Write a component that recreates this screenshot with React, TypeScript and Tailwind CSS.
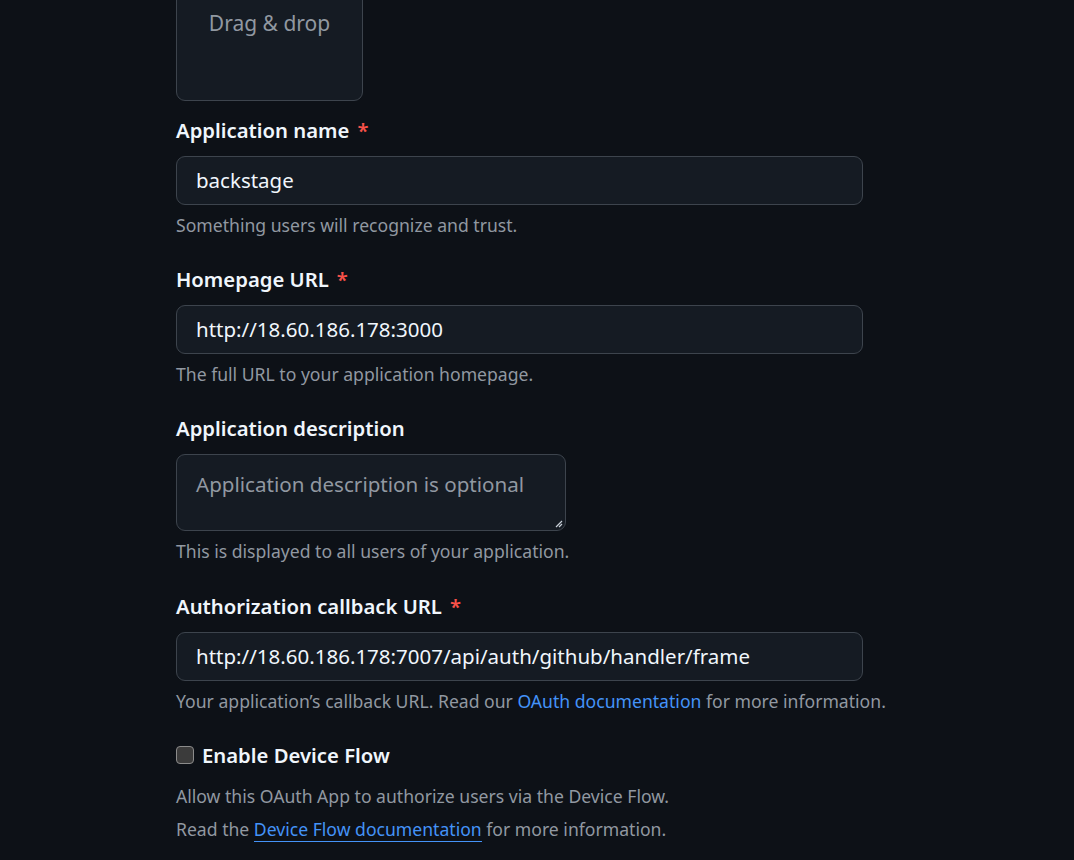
const font = { fontFamily: '"Noto Sans", "Open Sans", Arial, sans-serif' }

const Label = ({ children, required }: { children: string; required?: boolean }) => (
  <div className="flex h-[26px] items-center text-[20.3px] font-semibold leading-[26px] text-[#f0f6fc]">
    {children}
    {required ? <span className="ml-2 text-[#f85149]">*</span> : null}
  </div>
)

const Input = ({ value }: { value: string }) => (
  <div className="mt-[13px] flex h-[49px] w-[687px] items-center rounded-[9px] border border-[#3d444d] bg-[#151b23] px-[19px] text-[20.5px] text-[#f0f6fc]">
    {value}
  </div>
)

const Hint = ({ children }: { children: React.ReactNode }) => (
  <div className="mt-[8px] h-[24px] whitespace-nowrap text-[17.6px] leading-[24px] text-[#9198a1]">{children}</div>
)

export default function App() {
  return (
    <div style={font} className="min-h-[860px] w-full overflow-hidden bg-[#0d1117]">
      <div className="ml-[176px] flex flex-col">
        <div className="-mt-[90px] flex h-[191px] w-[187px] justify-center rounded-[9px] border border-[#3d444d] bg-[#151b23] pt-[97px] text-[21px] text-[#9198a1]">
          Drag &amp; drop
        </div>

        <div className="mt-[16px]">
          <Label required>Application name</Label>
          <Input value="backstage" />
          <Hint>Something users will recognize and trust.</Hint>
        </div>

        <div className="mt-[29px]">
          <Label required>Homepage URL</Label>
          <Input value="http://18.60.186.178:3000" />
          <Hint>The full URL to your application homepage.</Hint>
        </div>

        <div className="mt-[29px]">
          <Label>Application description</Label>
          <div className="relative mt-[13px] h-[77px] w-[390px] rounded-[9px] border border-[#3d444d] bg-[#151b23] px-[19px] pt-[15px] text-[20.6px] leading-[28px] text-[#9198a1]">
            Application description is optional
            <svg className="absolute bottom-[2px] right-[2px]" width="8" height="8" viewBox="0 0 8 8">
              <path d="M7 1L1 7M7 4L4 7" stroke="#c9d1d9" strokeWidth="1.2" />
            </svg>
          </div>
          <Hint>This is displayed to all users of your application.</Hint>
        </div>

        <div className="mt-[30px]">
          <Label required>Authorization callback URL</Label>
          <Input value="http://18.60.186.178:7007/api/auth/github/handler/frame" />
          <Hint>
            Your application’s callback URL. Read our <span className="text-[#4493f8]">OAuth documentation</span> for
            more information.
          </Hint>
        </div>

        <div className="mt-[29px] flex items-center">
          <div className="h-[18px] w-[18px] rounded-[4px] border border-[#8b8b8b] bg-[#3b3b3b]" />
          <div className="ml-[8px] text-[20.3px] font-semibold leading-[26px] text-[#f0f6fc]">Enable Device Flow</div>
        </div>
        <div className="mt-[16px] whitespace-nowrap text-[17.6px] leading-[24px] text-[#9198a1]">
          Allow this OAuth App to authorize users via the Device Flow.
        </div>
        <div className="mt-[9px] whitespace-nowrap text-[17.6px] leading-[24px] text-[#9198a1]">
          Read the{" "}
          <span className="border-b border-[#4493f8] text-[#4493f8]">Device Flow documentation</span> for more
          information.
        </div>
      </div>
    </div>
  )
}
